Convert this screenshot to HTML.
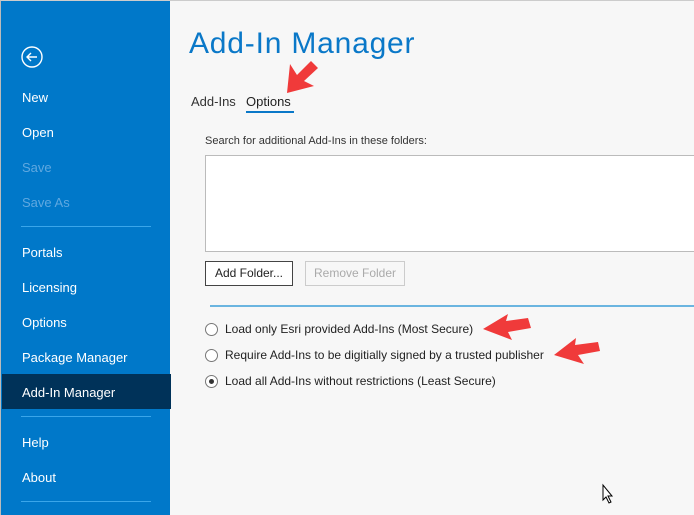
<!DOCTYPE html><html><head><style>
body{margin:0;width:694px;height:515px;overflow:hidden;background:#f7f7f7;font-family:"Liberation Sans",sans-serif;position:relative}
.sb{position:absolute;left:0;top:0;width:170px;height:515px;background:#0078c9;border-left:1px solid #bbb;border-top:1px solid #ccc;box-sizing:border-box}
.it{position:absolute;left:21px;color:#fff;font-size:13px}
.dis{color:#5fa8e0}
.sep{position:absolute;left:20px;width:130px;height:1px;background:#3aa6ea}
.sel{position:absolute;left:1px;top:373px;width:169px;height:35px;background:#003259}
.t{position:absolute;font-size:12px;color:#222}
.rad{position:absolute;left:205px;width:11px;height:11px;border:1px solid #777;border-radius:50%;background:#fff}
</style></head><body>
<div style="position:absolute;top:0;left:0;width:694px;height:1px;background:#ccc"></div>
<div class="sb">
<svg style="position:absolute;left:19px;top:44px" width="24" height="24" viewBox="0 0 24 24"><circle cx="12" cy="12" r="10" fill="none" stroke="#fff" stroke-width="1.4"/><path d="M17 12H7M11 8l-4 4 4 4" fill="none" stroke="#fff" stroke-width="1.4"/></svg>
<div class="sel"></div>
<div class="it" style="top:89px">New</div>
<div class="it" style="top:124px">Open</div>
<div class="it dis" style="top:159px">Save</div>
<div class="it dis" style="top:194px">Save As</div>
<div class="sep" style="top:225px"></div>
<div class="it" style="top:244px">Portals</div>
<div class="it" style="top:279px">Licensing</div>
<div class="it" style="top:314px">Options</div>
<div class="it" style="top:349px">Package Manager</div>
<div class="it" style="top:384px">Add-In Manager</div>
<div class="sep" style="top:415px"></div>
<div class="it" style="top:434px">Help</div>
<div class="it" style="top:469px">About</div>
<div class="sep" style="top:500px"></div>
</div>
<div style="position:absolute;left:189px;top:27px;font-size:30px;letter-spacing:0.8px;color:#0a78c8">Add-In Manager</div>
<div class="t" style="left:191px;top:94px;font-size:13px;color:#333">Add-Ins</div>
<div class="t" style="left:246px;top:94px;font-size:13px;color:#222">Options</div>
<div style="position:absolute;left:246px;top:111px;width:48px;height:2px;background:#0a78c8"></div>
<div class="t" style="left:205px;top:135px;font-size:11px;color:#333">Search for additional Add-Ins in these folders:</div>
<div style="position:absolute;left:205px;top:155px;width:495px;height:95px;border:1px solid #bbb;background:#fff"></div>
<div style="position:absolute;left:205px;top:261px;width:86px;height:23px;border:1px solid #444;background:#fff;font-size:12px;line-height:23px;text-align:center;color:#222">Add Folder...</div>
<div style="position:absolute;left:305px;top:261px;width:98px;height:23px;border:1px solid #ccc;background:#f7f7f7;font-size:12px;line-height:23px;text-align:center;color:#aaa">Remove Folder</div>
<div style="position:absolute;left:210px;top:305px;width:484px;height:2px;background:#6bb5e0"></div>
<div class="rad" style="top:323px"></div>
<div class="rad" style="top:349px"></div>
<div class="rad" style="top:375px"><div style="position:absolute;left:3px;top:3px;width:5px;height:5px;border-radius:50%;background:#333"></div></div>
<div class="t" style="left:225px;top:322px">Load only Esri provided Add-Ins (Most Secure)</div>
<div class="t" style="left:225px;top:348px">Require Add-Ins to be digitially signed by a trusted publisher</div>
<div class="t" style="left:225px;top:374px">Load all Add-Ins without restrictions (Least Secure)</div>
<svg style="position:absolute;left:0;top:0" width="694" height="515">
<g fill="#f03a3a">
<path d="M287 93 L290 64 L297 75 L311 61 L318 68 L304 81 L314 86 Z"/>
<path d="M483 329 L508 314 L506 321 L528 318 L531 328 L508 332 L512 340 Z"/>
<path d="M554 355 L576 338 L575 345 L598 342 L600 351 L578 355 L584 364 Z"/>
</g>
<path d="M603 485 L603 500 L606 497 L609 503 L611 502 L608 496 L612 496 Z" fill="#fff" stroke="#000" stroke-width="1"/>
</svg>
</body></html>
